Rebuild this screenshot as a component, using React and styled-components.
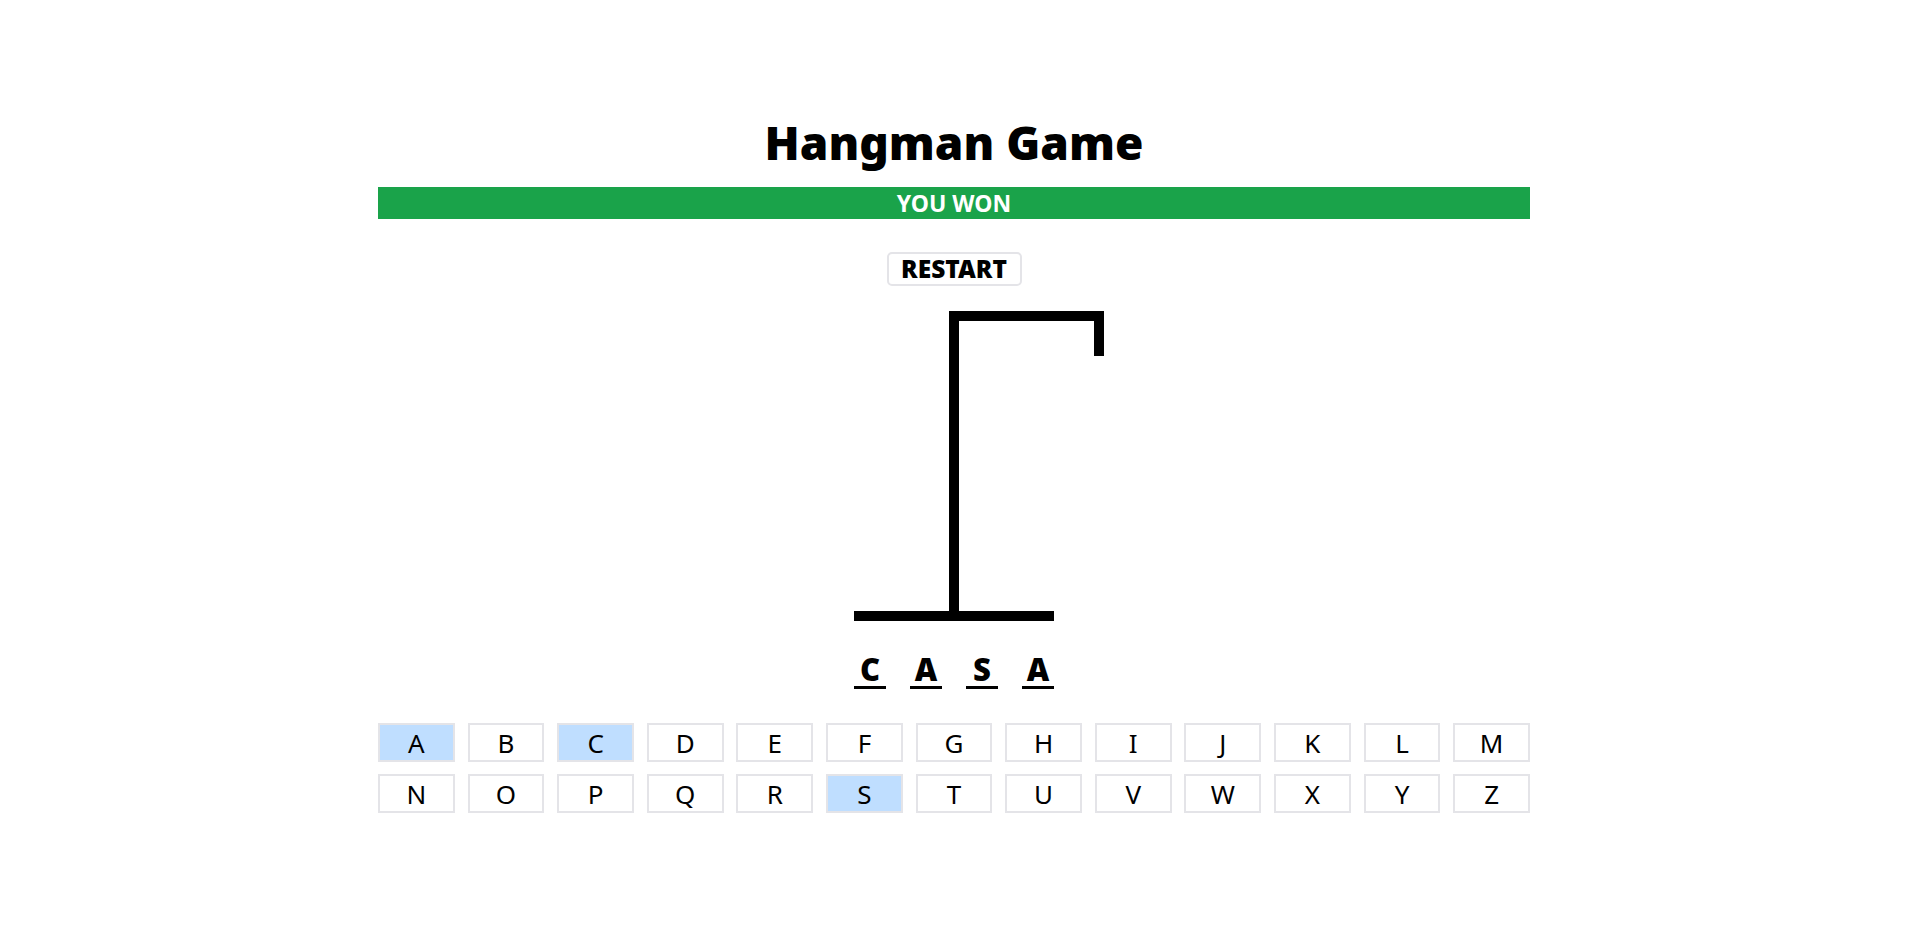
import React from "react";
import styled, { createGlobalStyle } from "styled-components";

const Global = createGlobalStyle`
  html, body { margin: 0; padding: 0; background: #fff; }
  body { font-family: "Noto Sans", "Open Sans", sans-serif; color: #000; }
`;

const Page = styled.main`
  max-width: 1152px;
  margin: 0 auto;
  padding-top: 112px;
  display: flex;
  flex-direction: column;
  align-items: center;
`;

const Title = styled.h1`
  margin: 0;
  font-size: 46px;
  line-height: 60px;
  font-weight: 900;
`;

const Banner = styled.div`
  width: 100%;
  margin-top: 15px;
  height: 32px;
  line-height: 32px;
  background: #1aa34a;
  color: #fff;
  text-align: center;
  font-size: 23px;
  font-weight: 700;
`;

const RestartButton = styled.button`
  margin-top: 33px;
  height: 34px;
  width: 135px;
  border: 2px solid #e4e4e8;
  border-radius: 5px;
  background: #fff;
  font-family: inherit;
  font-size: 24.5px;
  font-weight: 900;
  line-height: 1;
  padding: 0;
  color: #000;
  cursor: pointer;
`;

const Gallows = styled.div`
  position: relative;
  margin-top: 25px;
  width: 200px;
`;

const Beam = styled.div`
  height: ${(p) => p.$h}px;
  width: ${(p) => p.$w}px;
  margin-left: ${(p) => p.$ml || 0}px;
  background: #000;
`;

const Rope = styled.div`
  position: absolute;
  top: 0;
  left: 240px;
  width: 10px;
  height: 45px;
  background: #000;
`;

const Word = styled.div`
  margin-top: 31px;
  display: flex;
  gap: 24px;
`;

const Letter = styled.span`
  width: 32px;
  height: 34px;
  border-bottom: 3px solid #000;
  text-align: center;
  font-size: 31px;
  line-height: 34px;
  font-weight: 900;
`;

const Keyboard = styled.div`
  margin-top: 34px;
  width: 100%;
  display: grid;
  grid-template-columns: repeat(13, 1fr);
  column-gap: 12.8px;
  row-gap: 12px;
`;

const Key = styled.button`
  height: 39px;
  border: 2px solid #e4e4e8;
  border-radius: 0;
  background: ${(p) => (p.$active ? "#bfdeff" : "#fff")};
  font-family: inherit;
  font-size: 26px;
  font-weight: 400;
  color: #000;
  padding: 0;
  line-height: 1;
  cursor: pointer;
`;

const LETTERS = "ABCDEFGHIJKLMNOPQRSTUVWXYZ".split("");
const GUESSED = ["A", "C", "S"];
const WORD = "CASA".split("");

export default function App() {
  return (
    <>
      <Global />
      <Page>
        <Title>Hangman Game</Title>
        <Banner>YOU WON</Banner>
        <RestartButton>RESTART</RestartButton>
        <Gallows>
          <Rope />
          <Beam $h={10} $w={155} $ml={95} />
          <Beam $h={290} $w={10} $ml={95} />
          <Beam $h={10} $w={200} />
        </Gallows>
        <Word>
          {WORD.map((l, i) => (
            <Letter key={i}>{l}</Letter>
          ))}
        </Word>
        <Keyboard>
          {LETTERS.map((l) => (
            <Key key={l} $active={GUESSED.includes(l)}>
              {l}
            </Key>
          ))}
        </Keyboard>
      </Page>
    </>
  );
}
